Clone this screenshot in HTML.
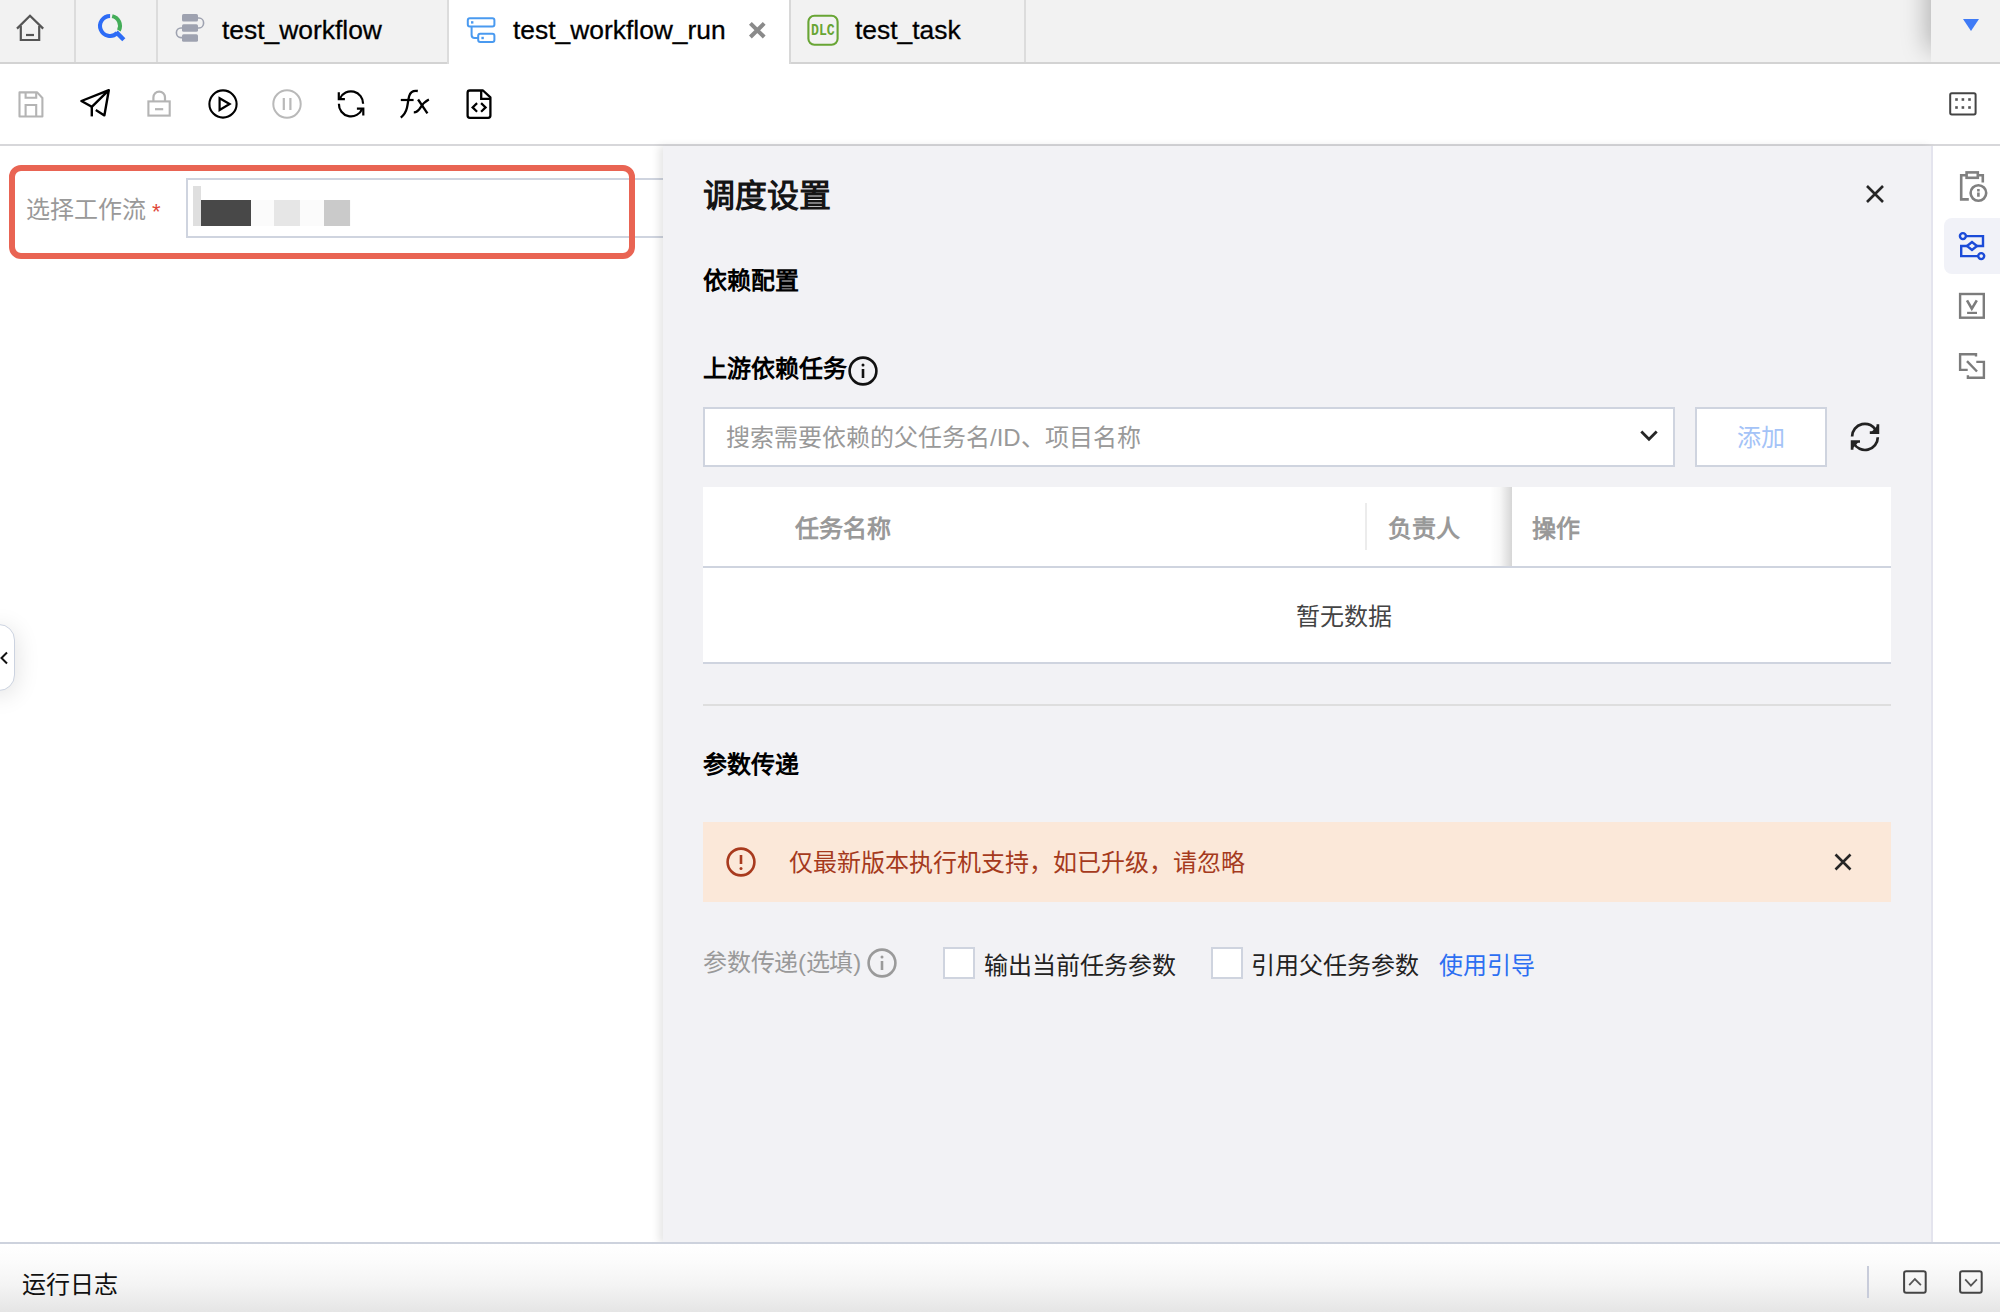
<!DOCTYPE html>
<html lang="zh-CN">
<head>
<meta charset="utf-8">
<title>test_workflow_run</title>
<style>
*{box-sizing:border-box;margin:0;padding:0}
html,body{width:2000px;height:1312px;overflow:hidden;background:#fff}
body{font-family:"Liberation Sans",sans-serif;font-size:24px;color:#000;position:relative}
.abs{position:absolute}
svg{position:absolute;overflow:visible}
.t{position:absolute;white-space:nowrap;line-height:1;margin-top:1px}
/* tab bar */
#tabbar{left:0;top:0;width:2000px;height:64px;background:#f2f2f2;border-bottom:2px solid #d3d3d3}
.tdiv{top:0;width:2px;height:62px;background:#dcdcdc}
#activetab{left:447px;top:0;width:344px;height:64px;background:#fff;border-left:2px solid #dcdcdc;border-right:2px solid #d8d8d8}
.tabtxt{font-size:26.4px;color:#000;top:16px;-webkit-text-stroke:.3px #000}
/* toolbar */
#toolbar{left:0;top:64px;width:2000px;height:82px;background:#fff;border-bottom:2px solid #d7d7da}
/* right drawer */
#drawer{left:663px;top:146px;width:1270px;height:1097px;background:#f2f2f5;border-right:2px solid #e4e4ee;box-shadow:-4px 0 8px rgba(0,0,0,.10)}
#rightbar{left:1933px;top:146px;width:67px;height:1097px;background:#fff}
/* bottom */
#bottombar{left:0;top:1242px;width:2000px;height:70px;border-top:2px solid #cdd2dd;background:linear-gradient(180deg,#fff 0%,#fbfbfb 28%,#f4f4f4 60%,#e5e5e5 100%)}
.b{font-weight:bold;margin-top:0}
.g9{color:#999}
</style>
</head>
<body>

<!-- ============ TAB BAR ============ -->
<div id="tabbar" class="abs"></div>
<div class="abs tdiv" style="left:74px"></div>
<div class="abs tdiv" style="left:156px"></div>
<div class="abs tdiv" style="left:1024px"></div>
<div id="activetab" class="abs"></div>

<div class="t tabtxt" style="left:222px">test_workflow</div>
<div class="t tabtxt" style="left:513px">test_workflow_run</div>
<div class="t tabtxt" style="left:855px">test_task</div>


<!-- tab icons (page coords) -->
<svg style="left:0;top:0" width="1100" height="64" viewBox="0 0 1100 64" fill="none">
  <!-- home -->
  <path d="M17 28.6 L30 15.8 L43.2 28.6" stroke="#555" stroke-width="2.2"/>
  <path d="M20.8 26 V40 H39.2 V26" stroke="#555" stroke-width="2.2"/>
  <path d="M26 35 H34" stroke="#555" stroke-width="2.2"/>
  <!-- search: blue ring + green arc + handle -->
  <path d="M110.1 15.9 A10 10 0 1 0 117.1 33" stroke="#2d6cf6" stroke-width="4"/>
  <path d="M112.2 16.15 A10 10 0 0 1 118.9 30.5" stroke="#43ad58" stroke-width="4"/>
  <path d="M116.2 32.1 L123.8 39.7" stroke="#2d6cf6" stroke-width="4.4"/>
  <!-- workflow (grey stacked) -->
  <rect x="182" y="14" width="16" height="7.6" rx="1.6" fill="#9ea2b0"/>
  <rect x="182" y="24.2" width="16" height="7.6" rx="1.6" fill="#9ea2b0"/>
  <rect x="182" y="34.2" width="16" height="7.6" rx="1.6" fill="#9ea2b0"/>
  <path d="M198 18 H199 A4.6 5 0 0 1 199 28 H198" stroke="#9ea2b0" stroke-width="1.6"/>
  <path d="M182 28 H181 A4.6 4.8 0 0 0 181 37.6 H182" stroke="#9ea2b0" stroke-width="1.6"/>
  <!-- blue workflow-run icon -->
  <rect x="467.8" y="18.2" width="26.6" height="8.4" rx="2" stroke="#4a9af0" stroke-width="2"/>
  <rect x="478.2" y="33.8" width="16.2" height="8.2" rx="2" stroke="#4a9af0" stroke-width="2"/>
  <path d="M471.6 26.6 V35 Q471.6 38 474.6 38 H478.2" stroke="#4a9af0" stroke-width="2"/>
  <rect x="471" y="21.2" width="2.4" height="2.4" fill="#4a9af0"/>
  <rect x="481.4" y="36.8" width="2.4" height="2.4" fill="#4a9af0"/>
  <!-- close x -->
  <path d="M750.4 23.4 L764.2 37 M764.2 23.4 L750.4 37" stroke="#8a8a8a" stroke-width="4"/>
  <!-- DLC -->
  <rect x="808.4" y="15.8" width="29.2" height="29" rx="6" stroke="#68a534" stroke-width="2.1"/>
</svg>
<div class="t b" style="left:811px;top:22.6px;font-size:16.5px;color:#68a534;font-family:'Liberation Mono',monospace;transform:scaleX(.8);transform-origin:0 0">DLC</div>

<!-- tab-bar right shadow + dropdown -->
<div class="abs" style="left:1851px;top:0;width:80px;height:62px;overflow:hidden"><div class="abs" style="left:80px;top:-40px;width:80px;height:90px;box-shadow:-4px 0 24px rgba(0,0,0,.27)"></div></div>
<div class="abs" style="left:1931px;top:0;width:69px;height:62px;background:#f2f2f2"></div>
<svg style="left:1962px;top:18px" width="18" height="14" viewBox="0 0 18 14"><path d="M1 1 H17 L9 13 Z" fill="#3f7bf6"/></svg>

<!-- ============ TOOLBAR ============ -->
<div id="toolbar" class="abs"></div>


<!-- toolbar icons (page coords) -->
<svg style="left:0;top:64px" width="2000" height="82" viewBox="0 64 2000 82" fill="none">
  <!-- save (disabled) -->
  <path d="M19.5 92.4 H37.2 L42.4 98 V116.5 H19.5 Z" stroke="#b4b4b4" stroke-width="2.1" stroke-linejoin="round"/>
  <path d="M25.6 92.4 V97.8 H36.2 V92.4" stroke="#b4b4b4" stroke-width="2.1"/>
  <path d="M25.6 116.5 V105 H36.2 V116.5" stroke="#b4b4b4" stroke-width="2.1"/>
  <!-- send -->
  <path d="M108.8 90.2 L81.4 101 L91.8 106.8 L108.8 90.2 L104.4 115.4 L95.8 110" stroke="#000" stroke-width="2.4" stroke-linejoin="round"/>
  <path d="M91.8 106.4 V116.4" stroke="#000" stroke-width="2.4"/>
  <!-- lock (disabled) -->
  <rect x="148.4" y="101.4" width="21.3" height="14.2" stroke="#b4b4b4" stroke-width="2.1"/>
  <path d="M153.4 101.4 V97.6 A5.8 6 0 0 1 165 97.6 V101.4" stroke="#b4b4b4" stroke-width="2.2"/>
  <path d="M155 109.2 H163.2" stroke="#b4b4b4" stroke-width="2.2"/>
  <!-- play -->
  <circle cx="223" cy="104" r="13.6" stroke="#000" stroke-width="2.1"/>
  <path d="M219.6 98.2 V110 L229.6 104 Z" stroke="#000" stroke-width="2.2" stroke-linejoin="miter"/>
  <!-- pause (disabled) -->
  <circle cx="287" cy="104" r="13.7" stroke="#b9b9b9" stroke-width="2"/>
  <path d="M283.8 98 V110 M290.4 98 V110" stroke="#b9b9b9" stroke-width="2.2"/>
  <!-- refresh -->
  <path d="M340 98.4 A12.1 12.1 0 0 1 363.1 103.8" stroke="#000" stroke-width="2.2"/>
  <path d="M338.9 103.8 A12.1 12.1 0 0 0 362.3 108.6" stroke="#000" stroke-width="2.2"/>
  <path d="M338.8 92.3 V99.2 H344.9" stroke="#000" stroke-width="2.2"/>
  <path d="M356.9 108.7 H363.3 V115.4" stroke="#000" stroke-width="2.2"/>
  <!-- fx -->
  <path d="M417.8 91 C412.6 90.2 410.4 92 409.2 96 C408 100.4 407.9 104 406.9 108 C405.8 112.6 404 115 400.8 117.6" stroke="#000" stroke-width="2.3"/>
  <path d="M400.8 100 H413.6" stroke="#000" stroke-width="2.2"/>
  <path d="M418.1 99.5 L427.4 113.3" stroke="#000" stroke-width="2.3"/>
  <path d="M428.9 99.5 C424.6 101.6 422.6 104 420.6 107.4 C418.8 110.4 416.8 112.4 413.8 112.4" stroke="#000" stroke-width="2.3"/>
  <!-- file code -->
  <path d="M469.8 90.5 H483 L490.4 97.4 V115.6 Q490.4 117.8 488.2 117.8 H469.8 Q467.6 117.8 467.6 115.6 V92.7 Q467.6 90.5 469.8 90.5 Z" stroke="#000" stroke-width="2.3" stroke-linejoin="round"/>
  <path d="M481.2 90.5 V98.9 H490.4" stroke="#000" stroke-width="2.3"/>
  <path d="M477.1 103.1 L472.6 107.4 L477.1 111.7 M481.1 103.1 L485.6 107.4 L481.1 111.7" stroke="#000" stroke-width="2.2"/>
  <!-- right: grid/keyboard icon -->
  <rect x="1950.2" y="93.2" width="25.4" height="21.2" rx="1.6" stroke="#444" stroke-width="2"/>
  <g fill="#555">
    <rect x="1955.2" y="98.2" width="2.6" height="2.6"/><rect x="1961.6" y="98.2" width="2.6" height="2.6"/><rect x="1968.2" y="98.2" width="2.6" height="2.6"/>
    <rect x="1955.2" y="106.2" width="2.6" height="2.6"/><rect x="1961.6" y="106.2" width="2.6" height="2.6"/><rect x="1968.2" y="106.2" width="2.6" height="2.6"/>
  </g>
</svg>

<!-- ============ LEFT CONTENT ============ -->
<div class="t g9" style="left:26px;top:197px">选择工作流</div>
<div class="t" style="left:152px;top:200px;color:#e0473a;font-size:22px">*</div>
<div class="abs" style="left:186px;top:178px;width:520px;height:60px;border:2px solid #cfd4df;background:#fff"></div>
<div class="abs" style="left:193px;top:186px;width:8px;height:40px;background:#dfdfdf"></div>
<div class="abs" style="left:201px;top:200px;width:50px;height:26px;background:#484848"></div>
<div class="abs" style="left:251px;top:200px;width:100px;height:26px;background:#fbfbfb"></div>
<div class="abs" style="left:274px;top:200px;width:26px;height:26px;background:#e6e6e6"></div>
<div class="abs" style="left:324px;top:200px;width:26px;height:26px;background:#cacaca"></div>
<div class="abs" style="left:9px;top:165px;width:626px;height:94px;border:6px solid #e96453;border-radius:12px"></div>

<!-- left collapse handle -->
<div class="abs" style="left:-20px;top:624.3px;width:34.9px;height:66.4px;background:#fff;border:1.8px solid #ccd3e0;border-radius:16px;box-shadow:1px 4px 24px rgba(0,0,0,.12)"></div>
<svg style="left:0;top:651px" width="10" height="14" viewBox="0 0 10 14"><path d="M7 1.5 L1.5 7 L7 12.5" fill="none" stroke="#111" stroke-width="2"/></svg>

<!-- ============ DRAWER ============ -->
<div id="drawer" class="abs"></div>
<div id="rightbar" class="abs"></div>

<div class="t b" style="left:703px;top:179.5px;font-size:32px;color:#151515">调度设置</div>
<svg style="left:1865px;top:184px" width="20" height="20" viewBox="0 0 20 20"><path d="M2 2 L18 18 M18 2 L2 18" stroke="#262626" stroke-width="2.6" fill="none"/></svg>

<div class="t b" style="left:703px;top:269px">依赖配置</div>
<div class="t b" style="left:703px;top:357px">上游依赖任务</div>
<svg style="left:848px;top:356px" width="30" height="30" viewBox="0 0 30 30"><circle cx="15" cy="15" r="13.4" fill="none" stroke="#111" stroke-width="2.6"/><path d="M15 13 V22" stroke="#111" stroke-width="2.6"/><circle cx="15" cy="9" r="1.5" fill="#111"/></svg>

<!-- search select -->
<div class="abs" style="left:703px;top:407px;width:972px;height:60px;border:2px solid #cfd4df;background:#fff"></div>
<div class="t g9" style="left:726px;top:425px">搜索需要依赖的父任务名/ID、项目名称</div>
<svg style="left:1640px;top:430px" width="18" height="12" viewBox="0 0 18 12"><path d="M1.3 1.5 L9 9.3 L16.7 1.5" fill="none" stroke="#262626" stroke-width="2.8"/></svg>
<div class="abs" style="left:1695px;top:407px;width:132px;height:60px;border:2px solid #cfd4df;background:#fff"></div>
<div class="t" style="left:1737px;top:425px;color:#a4c3f7">添加</div>


<svg style="left:1845px;top:417px" width="40" height="40" viewBox="1845 417 40 40" fill="none">
  <path d="M1852.1 436.6 A12.8 12.8 0 0 1 1876.4 431" stroke="#222" stroke-width="2.7"/>
  <path d="M1877.8 437.2 A12.8 12.8 0 0 1 1853.6 443" stroke="#222" stroke-width="2.7"/>
  <path d="M1877.9 424.2 V432.6 H1869.8" stroke="#222" stroke-width="2.7"/>
  <path d="M1877.9 425 L1877.9 432.6 L1871 432.6 Z" fill="#222"/>
  <path d="M1852.1 449.8 V441.5 H1860" stroke="#222" stroke-width="2.7"/>
  <path d="M1852.1 449 L1852.1 441.5 L1859 441.5 Z" fill="#222"/>
</svg>

<!-- table -->
<div class="abs" style="left:703px;top:487px;width:1188px;height:177px;background:#fff;border-bottom:2px solid #cfd4df"></div>
<div class="abs" style="left:703px;top:566px;width:1188px;height:2px;background:#cfd4df"></div>
<div class="abs" style="left:1365px;top:503px;width:2px;height:47px;background:#ececec"></div>
<div class="abs" style="left:1490px;top:487px;width:22px;height:79px;background:linear-gradient(90deg,rgba(0,0,0,0) 0%,rgba(0,0,0,.03) 45%,rgba(0,0,0,.16) 100%)"></div>
<div class="t b g9" style="left:795px;top:517px">任务名称</div>
<div class="t b g9" style="left:1388px;top:517px">负责人</div>
<div class="t b g9" style="left:1532px;top:517px">操作</div>
<div class="t" style="left:1296px;top:604px;color:#444">暂无数据</div>

<!-- separator -->
<div class="abs" style="left:703px;top:704px;width:1188px;height:2px;background:#dedede"></div>

<div class="t b" style="left:703px;top:753px">参数传递</div>

<!-- alert -->
<div class="abs" style="left:703px;top:822px;width:1188px;height:80px;background:#fbe8d9"></div>
<svg style="left:726px;top:847px" width="30" height="30" viewBox="0 0 30 30"><circle cx="15" cy="15" r="13.4" fill="none" stroke="#a83a1e" stroke-width="2.6"/><path d="M15 8 V17" stroke="#a83a1e" stroke-width="2.6"/><circle cx="15" cy="21.5" r="1.5" fill="#a83a1e"/></svg>
<div class="t" style="left:789px;top:850px;color:#a53a1d">仅最新版本执行机支持，如已升级，请忽略</div>
<svg style="left:1834px;top:853px" width="18" height="18" viewBox="0 0 18 18"><path d="M1.5 1.5 L16.5 16.5 M16.5 1.5 L1.5 16.5" stroke="#262626" stroke-width="2.6" fill="none"/></svg>

<!-- params row -->
<div class="t g9" style="left:703px;top:950px;letter-spacing:-.25px">参数传递(选填)</div>
<svg style="left:867px;top:948px" width="30" height="30" viewBox="0 0 30 30"><circle cx="15" cy="15" r="13.4" fill="none" stroke="#9a9a9a" stroke-width="2.6"/><path d="M15 13 V22" stroke="#9a9a9a" stroke-width="2.6"/><circle cx="15" cy="9" r="1.5" fill="#999"/></svg>
<div class="abs" style="left:943px;top:947px;width:32px;height:32px;border:2px solid #cfd4df;background:#fff"></div>
<div class="t" style="left:984px;top:953px;color:#222">输出当前任务参数</div>
<div class="abs" style="left:1211px;top:947px;width:32px;height:32px;border:2px solid #cfd4df;background:#fff"></div>
<div class="t" style="left:1251px;top:953px;color:#222">引用父任务参数</div>
<div class="t" style="left:1439px;top:953px;color:#2c6ff2">使用引导</div>

<!-- ============ RIGHT ICON BAR ============ -->
<div class="abs" style="left:1944px;top:218px;width:70px;height:56px;background:#f1f2f8;border-radius:8px"></div>


<svg style="left:1940px;top:160px" width="60" height="240" viewBox="1940 160 60 240" fill="none">
  <!-- clipboard + info -->
  <path d="M1968.8 199.4 H1961.2 V175.2 H1982.8 V182.6" stroke="#808080" stroke-width="2.6"/>
  <rect x="1966.6" y="172.4" width="11.2" height="5.4" stroke="#808080" stroke-width="2.6" fill="#fff"/>
  <circle cx="1978.4" cy="193" r="7.8" stroke="#808080" stroke-width="2.6" fill="#fff"/>
  <path d="M1978.4 189 V191.4 M1978.4 192.6 V196.8" stroke="#808080" stroke-width="2.6"/>
  <!-- blue flow -->
  <circle cx="1962.9" cy="236.1" r="3" stroke="#1b4bd8" stroke-width="2.4"/>
  <path d="M1966 236.1 H1983 V246 H1977" stroke="#1b4bd8" stroke-width="2.4"/>
  <path d="M1967 246 L1972 242 L1977 246 L1972 250 Z" stroke="#1b4bd8" stroke-width="2.4"/>
  <path d="M1967 246 H1961.2 V256.1 H1978" stroke="#1b4bd8" stroke-width="2.4"/>
  <circle cx="1981.2" cy="256.1" r="3" stroke="#1b4bd8" stroke-width="2.4"/>
  <!-- download box -->
  <rect x="1960.1" y="294" width="23.7" height="23.7" stroke="#7c7c7c" stroke-width="2.4"/>
  <path d="M1967 300.3 L1971.8 308.6 L1976.8 300.3" stroke="#7c7c7c" stroke-width="2.6"/>
  <path d="M1967.1 312.9 H1977" stroke="#7c7c7c" stroke-width="2.2"/>
  <!-- convert -->
  <path d="M1976 356.6 V354.2 H1960.1 V369.9 H1967.7" stroke="#7c7c7c" stroke-width="2.4"/>
  <path d="M1976.3 361.9 H1983.9 V377.7 H1967.9 V375.2" stroke="#7c7c7c" stroke-width="2.4"/>
  <path d="M1967 361.2 L1977 371.5" stroke="#7c7c7c" stroke-width="2.4"/>
</svg>

<!-- ============ BOTTOM BAR ============ -->
<div id="bottombar" class="abs"></div>
<div class="t" style="left:22px;top:1272px;color:#111">运行日志</div>
<div class="abs" style="left:1867px;top:1266px;width:2px;height:32px;background:#c8ccda"></div>


<svg style="left:1890px;top:1260px" width="110" height="45" viewBox="1890 1260 110 45" fill="none">
  <rect x="1904.1" y="1271.2" width="21.6" height="21.6" rx="2" stroke="#444" stroke-width="2"/>
  <path d="M1909.2 1285.2 L1914.9 1279 L1920.9 1285.2" stroke="#555" stroke-width="1.8"/>
  <rect x="1960.1" y="1271.2" width="21.6" height="21.6" rx="2" stroke="#444" stroke-width="2"/>
  <path d="M1965.2 1279.4 L1970.9 1285.6 L1976.9 1279.4" stroke="#555" stroke-width="1.8"/>
</svg>

</body>
</html>
